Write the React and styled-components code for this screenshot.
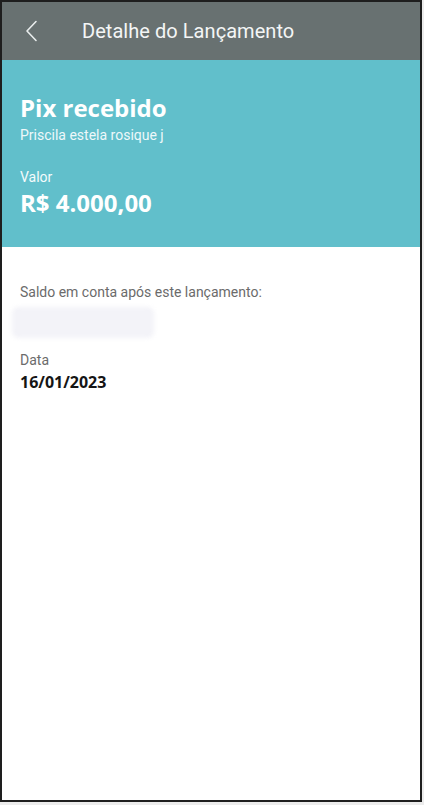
import React from 'react';
import styled, { createGlobalStyle } from 'styled-components';

const GlobalStyle = createGlobalStyle`
  html, body {
    margin: 0;
    padding: 0;
    background: #ececec;
  }
  * { box-sizing: border-box; }
`;

const Frame = styled.div`
  width: 422px;
  height: 802px;
  border: 2px solid #1e1e1e;
  background: #ffffff;
  display: flex;
  flex-direction: column;
  overflow: hidden;
  font-family: Roboto, "Liberation Sans", sans-serif;
`;

const TopBar = styled.header`
  height: 58px;
  background: #687171;
  display: flex;
  align-items: center;
  padding-left: 23px;
  gap: 43px;
`;

const BackButton = styled.button`
  border: 0;
  background: none;
  padding: 0;
  display: flex;
  align-items: center;
  cursor: pointer;
`;

const Title = styled.h1`
  margin: 0;
  font-size: 20px;
  font-weight: 400;
  color: #f4f6f6;
  letter-spacing: 0.05px;
`;

const Hero = styled.section`
  height: 187px;
  background: #61bfcb;
  padding: 34px 18px 0;
  color: #ffffff;
`;

const Heading = styled.div`
  font-family: "Open Sans", "Liberation Sans", sans-serif;
  font-weight: 700;
  font-size: 24px;
  line-height: 28px;
  margin-top: ${p => p.gap || 0}px;
`;

const Sub = styled.div`
  font-size: 14px;
  line-height: 16px;
  color: ${p => p.color || '#eef8fa'};
  margin-top: ${p => p.gap || 0}px;
`;

const Body = styled.section`
  padding: 37px 18px 0;
  display: flex;
  flex-direction: column;
`;

const Label = styled.div`
  font-size: 14px;
  line-height: 17px;
  color: #6b6b6b;
`;

const Hidden = styled.div`
  margin: 6px 0 0 -8px;
  width: 142px;
  height: 31px;
  border-radius: 6px;
  background: #f3f3f8;
  filter: blur(2px);
`;

const Field = styled.div`
  margin-top: ${p => p.gap || 0}px;
  display: flex;
  flex-direction: column;
  gap: 3px;
`;

const Value = styled.div`
  font-family: "Open Sans", "Liberation Sans", sans-serif;
  font-weight: 700;
  font-size: 16px;
  line-height: 20px;
  color: #151515;
`;

const Chevron = () => (
  <svg width="14" height="22" viewBox="0 0 14 22" fill="none">
    <path d="M11 1.5 L2 11 L11 20.5" stroke="#e9eded" strokeWidth="1.6" strokeLinecap="round" strokeLinejoin="round" />
  </svg>
);

export default function App() {
  return (
    <>
      <GlobalStyle />
      <Frame>
        <TopBar>
          <BackButton aria-label="Voltar">
            <Chevron />
          </BackButton>
          <Title>Detalhe do Lançamento</Title>
        </TopBar>
        <Hero>
          <Heading>Pix recebido</Heading>
          <Sub gap={5}>Priscila estela rosique j</Sub>
          <Sub gap={26} color="#f4fbfc">Valor</Sub>
          <Heading gap={4}>R$ 4.000,00</Heading>
        </Hero>
        <Body>
          <Label>Saldo em conta após este lançamento:</Label>
          <Hidden />
          <Field gap={14}>
            <Label>Data</Label>
            <Value>16/01/2023</Value>
          </Field>
        </Body>
      </Frame>
    </>
  );
}
